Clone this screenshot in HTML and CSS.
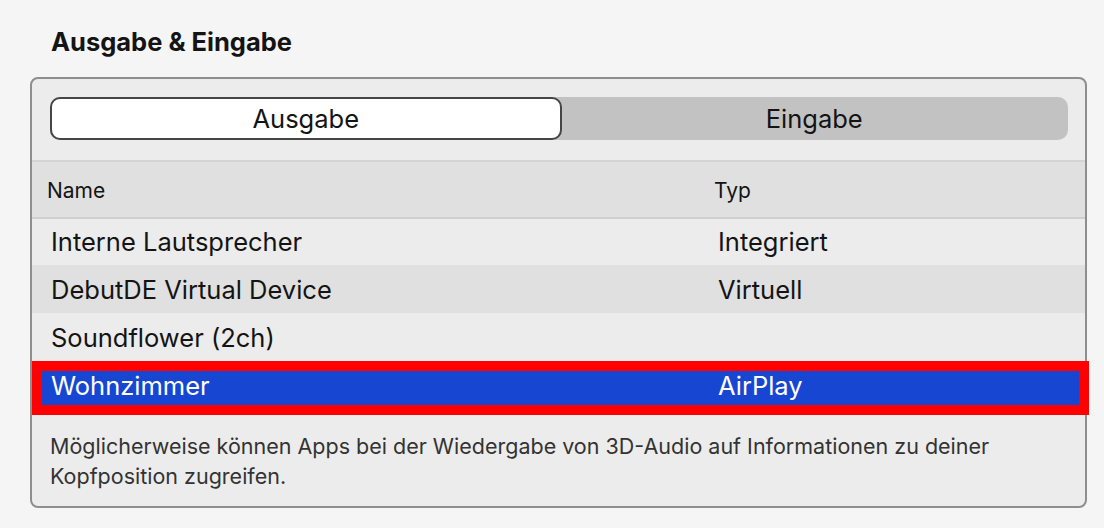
FILE: index.html
```html
<!DOCTYPE html>
<html lang="de">
<head>
<meta charset="utf-8">
<link rel="stylesheet" href="styles.css">
</head>
<body>
<h2 class="title">Ausgabe &amp; Eingabe</h2>
<section class="card">
  <div class="seg-wrap">
    <div class="seg">
      <div class="seg-item selected">Ausgabe</div>
      <div class="seg-item">Eingabe</div>
    </div>
  </div>
  <div class="table">
    <div class="thead">
      <div class="c-name">Name</div>
      <div class="c-type">Typ</div>
    </div>
    <div class="row">
      <div class="c-name">Interne Lautsprecher</div>
      <div class="c-type">Integriert</div>
    </div>
    <div class="row alt">
      <div class="c-name">DebutDE Virtual Device</div>
      <div class="c-type">Virtuell</div>
    </div>
    <div class="row">
      <div class="c-name">Soundflower (2ch)</div>
      <div class="c-type"></div>
    </div>
    <div class="row sel">
      <div class="c-name">Wohnzimmer</div>
      <div class="c-type">AirPlay</div>
    </div>
  </div>
  <p class="note">Möglicherweise können Apps bei der Wiedergabe von 3D-Audio auf Informationen zu deiner Kopfposition zugreifen.</p>
</section>
</body>
</html>
```
FILE: styles.css
```css
html, body {
  margin: 0;
  padding: 0;
  background: #f5f5f5;
  font-family: Inter, "Liberation Sans", sans-serif;
  color: #141414;
}
body {
  padding: 27px 0 0 0;
  width: 1104px;
  height: 528px;
  box-sizing: border-box;
  overflow: hidden;
}
.title {
  margin: 0 0 20px 51px;
  font-size: 25.5px;
  line-height: 30px;
  font-weight: 700;
  height: 30px;
}
.card {
  margin-left: 30px;
  width: 1057px;
  height: 431px;
  box-sizing: border-box;
  border: 2px solid #8e8e8e;
  border-radius: 8px;
  background: #ececec;
  position: relative;
}
.seg-wrap {
  padding: 18px 17px 0 18px;
  height: 83px;
  box-sizing: border-box;
  border-bottom: 2px solid #d4d4d4;
}
.seg {
  display: flex;
  height: 43px;
  background: #c2c2c2;
  border-radius: 10px;
}
.seg-item {
  flex: 1;
  display: flex;
  align-items: center;
  justify-content: center;
  font-size: 25.5px;
}
.seg-item.selected {
  background: #fff;
  border: 2px solid #454545;
  border-radius: 10px;
  margin-right: -1px;
}
.thead {
  display: flex;
  align-items: center;
  height: 53px;
  box-sizing: content-box;
  padding-top: 2px;
  background: #e0e0e0;
  border-bottom: 2px solid #cfcfcf;
  font-size: 21px;
  padding-left: 15px;
  margin-bottom: -2px;
}
.thead .c-name { width: 667px; }
.row {
  display: flex;
  align-items: center;
  height: 48px;
  font-size: 25.5px;
  padding-left: 19px;
  position: relative;
}
.row.alt { background: #e0e0e0; }
.row .c-name { width: 667px; }
.row.sel {
  background: #1646d2;
  color: #fff;
  margin-right: -4px;
}
.row.sel::after {
  content: "";
  position: absolute;
  left: 0;
  top: 0;
  right: 0;
  bottom: -6px;
  border: 10px solid #ff0000;
  pointer-events: none;
}
.note {
  margin: 22px 20px 0 18px;
  font-size: 21.5px;
  line-height: 30px;
  color: #333;
}
```
